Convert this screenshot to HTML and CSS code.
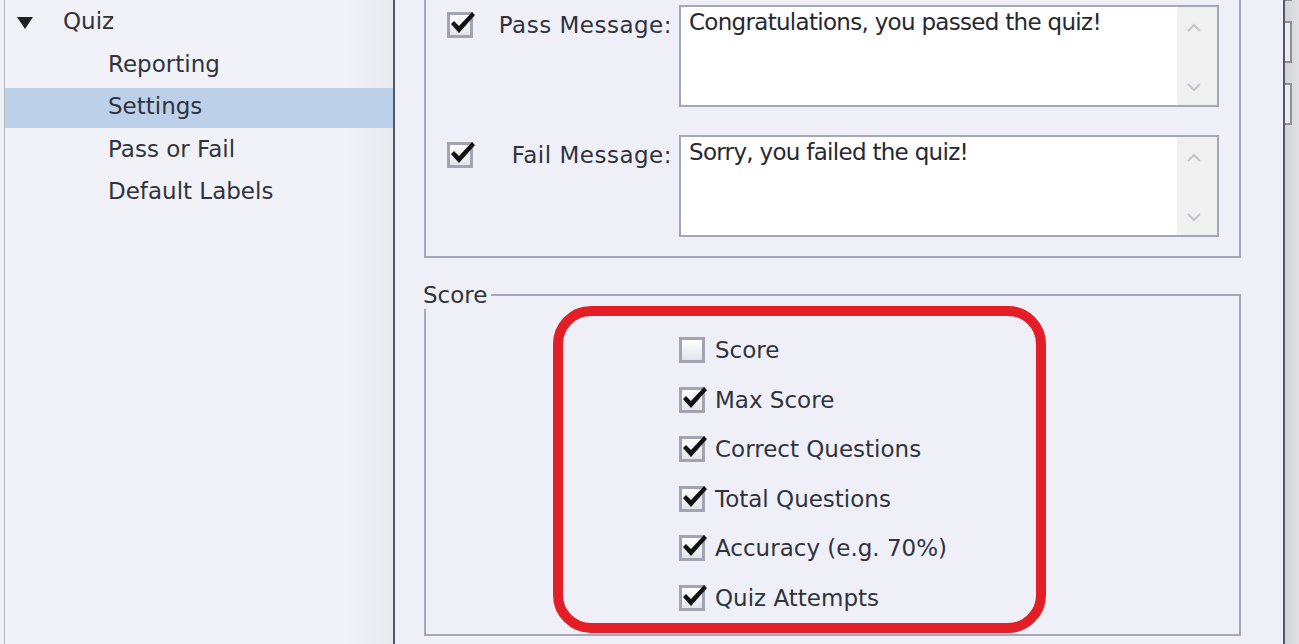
FILE: index.html
```html
<!DOCTYPE html>
<html lang="en">
<head>
<meta charset="utf-8">
<title>Quiz Settings</title>
<link rel="stylesheet" href="styles.css">
</head>
<body>
<div class="app">
  <aside class="sidebar">
    <ul class="tree">
      <li class="node parent"><span class="caret"></span>Quiz</li>
      <li class="node child">Reporting</li>
      <li class="node child selected">Settings</li>
      <li class="node child">Pass or Fail</li>
      <li class="node child">Default Labels</li>
    </ul>
  </aside>

  <main class="panel">
    <section class="group messages">
      <div class="msg-row">
        <span class="check checked"><svg viewBox="0 0 26 26"><polygon points="4,12 7,9 12,14 25,0 28,3 12,21"/></svg></span>
        <span class="msg-label">Pass Message:</span>
        <div class="textbox">
          <div class="textbox-text">Congratulations, you passed the quiz!</div>
          <div class="vscroll">
            <svg class="chev" viewBox="0 0 14 8"><polyline points="1,7 7,1 13,7"/></svg>
            <svg class="chev" viewBox="0 0 14 8"><polyline points="1,1 7,7 13,1"/></svg>
          </div>
        </div>
      </div>
      <div class="msg-row">
        <span class="check checked"><svg viewBox="0 0 26 26"><polygon points="4,12 7,9 12,14 25,0 28,3 12,21"/></svg></span>
        <span class="msg-label">Fail Message:</span>
        <div class="textbox">
          <div class="textbox-text">Sorry, you failed the quiz!</div>
          <div class="vscroll">
            <svg class="chev" viewBox="0 0 14 8"><polyline points="1,7 7,1 13,7"/></svg>
            <svg class="chev" viewBox="0 0 14 8"><polyline points="1,1 7,7 13,1"/></svg>
          </div>
        </div>
      </div>
    </section>

    <fieldset class="group score">
      <legend>Score</legend>
      <ul class="score-list">
        <li class="score-item"><span class="check"></span>Score</li>
        <li class="score-item"><span class="check checked"><svg viewBox="0 0 26 26"><polygon points="4,12 7,9 12,14 25,0 28,3 12,21"/></svg></span>Max Score</li>
        <li class="score-item"><span class="check checked"><svg viewBox="0 0 26 26"><polygon points="4,12 7,9 12,14 25,0 28,3 12,21"/></svg></span>Correct Questions</li>
        <li class="score-item"><span class="check checked"><svg viewBox="0 0 26 26"><polygon points="4,12 7,9 12,14 25,0 28,3 12,21"/></svg></span>Total Questions</li>
        <li class="score-item"><span class="check checked"><svg viewBox="0 0 26 26"><polygon points="4,12 7,9 12,14 25,0 28,3 12,21"/></svg></span>Accuracy (e.g. 70%)</li>
        <li class="score-item"><span class="check checked"><svg viewBox="0 0 26 26"><polygon points="4,12 7,9 12,14 25,0 28,3 12,21"/></svg></span>Quiz Attempts</li>
      </ul>
    </fieldset>
  </main>

  <div class="edge">
    <span class="edge-btn first"></span>
    <span class="edge-btn"></span>
    <span class="edge-btn"></span>
  </div>

  <div class="annotation"></div>
</div>
</body>
</html>
```

FILE: styles.css
```css
* { box-sizing: border-box; }

html, body {
  margin: 0;
  padding: 0;
}

body {
  width: 1299px;
  height: 644px;
  overflow: hidden;
  background: #eff0f6;
  font-family: "DejaVu Sans", Verdana, sans-serif;
  font-size: 23px;
  color: #30333d;
}

.app {
  position: relative;
  display: flex;
  height: 644px;
  padding-left: 4px;
}

/* ---------- sidebar tree ---------- */
.sidebar {
  width: 391px;
  flex-shrink: 0;
  border-left: 1px solid #b4b7c1;
  border-right: 2px solid #545866;
  background: linear-gradient(to right, #f1f2f8 88%, #e8e9ef);
  padding-top: 3px;
}

.tree {
  list-style: none;
  margin: 0;
  padding: 0;
  display: flex;
  flex-direction: column;
  gap: 2.5px;
}

.node {
  height: 40px;
  line-height: 36px;
  padding-bottom: 4px;
  white-space: nowrap;
}

.node.parent {
  display: flex;
  align-items: center;
  padding-left: 12px;
}

.caret {
  width: 0;
  height: 0;
  border-left: 8px solid transparent;
  border-right: 8px solid transparent;
  border-top: 12px solid #1f2024;
  margin-right: 30px;
  margin-top: 4px;
}

.node.child {
  padding-left: 103px;
}

.node.selected {
  background: #bdd0ea;
}

/* ---------- main panel ---------- */
.panel {
  width: 890px;
  flex-shrink: 0;
  border-right: 2px solid #545866;
  padding: 0 42px 0 29px;
  background: #eff0f7;
}

.group {
  border: 2px solid #a6a9b5;
}

.messages {
  border-top: none;
  padding: 5px 20px 19px 21px;
  display: flex;
  flex-direction: column;
  gap: 28px;
}

.msg-row {
  display: flex;
  align-items: flex-start;
}

.check {
  position: relative;
  width: 26px;
  height: 26px;
  flex-shrink: 0;
  border: 3px solid #a2a5b0;
  background: linear-gradient(#ffffff, #e3e4ea);
}

.msg-row .check {
  margin-top: 7px;
}

.check svg {
  position: absolute;
  left: -3px;
  top: -3px;
  width: 26px;
  height: 26px;
  overflow: visible;
  fill: #111214;
}

.msg-label {
  width: 199px;
  margin-right: 7px;
  margin-top: 6px;
  line-height: 28px;
  text-align: right;
  letter-spacing: 0.5px;
  white-space: nowrap;
}

.textbox {
  width: 540px;
  height: 102px;
  flex-shrink: 0;
  display: flex;
  border: 2px solid #a4a7b4;
  background: #ffffff;
}

.textbox-text {
  flex: 1;
  padding: 1px 8px;
  line-height: 28px;
  letter-spacing: -0.7px;
  color: #26282f;
  white-space: nowrap;
}

.vscroll {
  width: 40px;
  display: flex;
  flex-direction: column;
  justify-content: space-between;
  align-items: center;
  padding: 17px 6px 14px 0;
  background: #f0f0f1;
}

.chev {
  width: 14px;
  height: 8px;
  overflow: visible;
}

.chev polyline {
  fill: none;
  stroke: #c4c5c9;
  stroke-width: 2;
}

/* ---------- score fieldset ---------- */
.score {
  margin: 23px 0 0;
  padding: 28px 0 23px 0;
  min-width: 0;
}

.score legend {
  margin-left: -3px;
  padding: 0 4px 0 0;
  line-height: 28px;
}

.score-list {
  list-style: none;
  margin: 0;
  padding: 0 0 0 253px;
  display: flex;
  flex-direction: column;
  gap: 23.6px;
}

.score-item {
  display: flex;
  align-items: center;
  gap: 10px;
  height: 26px;
  line-height: 26px;
  white-space: nowrap;
}

/* ---------- right edge ---------- */
.edge {
  flex: 1;
  display: flex;
  flex-direction: column;
  gap: 20px;
  overflow: hidden;
  background: linear-gradient(to right, #d3d3d8, #e0e0e4);
}

.edge-btn {
  flex-shrink: 0;
  width: 7px;
  height: 42px;
  border: 2px solid #8d8f99;
  border-left: none;
  background: #ececf0;
}

.edge-btn.first {
  margin-top: -41px;
}

/* ---------- annotation overlay ---------- */
.annotation {
  position: absolute;
  left: 553px;
  top: 306px;
  width: 493px;
  height: 327px;
  border: 10px solid #e41e26;
  border-radius: 38px;
  pointer-events: none;
}
```
